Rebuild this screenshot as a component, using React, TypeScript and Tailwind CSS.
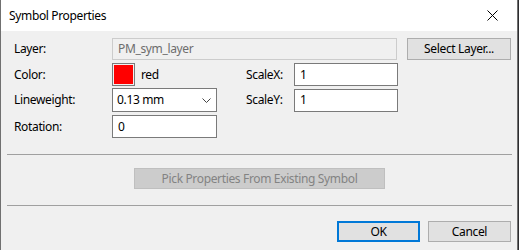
import React from "react";

const font = { fontFamily: '"Noto Sans", "Open Sans", Arial, sans-serif' };

export default function App() {
  return (
    <div className="w-[519px] h-[250px] bg-[#2d2d30] flex" style={font}>
      <div className="w-[518px] h-[250px] flex flex-col border-l border-r border-[#707070] bg-[#f0f0f0] text-[12px] tracking-[-0.35px] text-black leading-none">
        {/* Title bar */}
        <div className="h-[31px] bg-white flex items-center justify-between pl-[8px]">
          <span className="text-[12px] text-black">Symbol Properties</span>
          <div className="w-[46px] h-[31px] flex items-center justify-center mr-[2px]">
            <svg width="11" height="11" viewBox="0 0 11 11">
              <path d="M0.5 0.5 L10.5 10.5 M10.5 0.5 L0.5 10.5" stroke="#000" strokeWidth="1" fill="none" />
            </svg>
          </div>
        </div>

        {/* Body */}
        <div className="flex flex-col pl-[13px] pt-[7px]">
          {/* Row 1 */}
          <div className="flex items-center h-[22px]">
            <div className="w-[98px]">Layer:</div>
            <div className="w-[285px] h-[22px] border border-[#cccccc] bg-[#f0f0f0] text-[#6d6d6d] flex items-center pl-[5px]">
              PM_sym_layer
            </div>
            <div className="ml-[10px] w-[104px] h-[22px] border border-[#adadad] bg-[#e1e1e1] flex items-center justify-center">
              Select Layer...
            </div>
          </div>

          {/* Row 2 */}
          <div className="flex items-center h-[23px] mt-[3px]">
            <div className="w-[98px]">Color:</div>
            <div className="w-[23px] h-[23px] border border-[#7a7a7a] p-[1px] bg-[#f0f0f0]">
              <div className="w-full h-full bg-[#ff0000]" />
            </div>
            <div className="w-[111px] pl-[6px]">red</div>
            <div className="w-[48px]">ScaleX:</div>
            <div className="w-[104px] h-[23px] border border-[#7a7a7a] bg-white flex items-center pl-[5px]">1</div>
          </div>

          {/* Row 3 */}
          <div className="flex items-center h-[24px] mt-[2px]">
            <div className="w-[98px]">Lineweight:</div>
            <div className="w-[105px] h-[24px] border border-[#7a7a7a] bg-white flex items-center justify-between pl-[4px] pr-[5px]">
              <span>0.13 mm</span>
              <svg width="9" height="5" viewBox="0 0 9 5">
                <path d="M0.5 0.5 L4.5 4.5 L8.5 0.5" stroke="#444" strokeWidth="1" fill="none" />
              </svg>
            </div>
            <div className="w-[29px]" />
            <div className="w-[48px]">ScaleY:</div>
            <div className="w-[104px] h-[23px] border border-[#7a7a7a] bg-white flex items-center pl-[5px]">1</div>
          </div>

          {/* Row 4 */}
          <div className="flex items-center h-[23px] mt-[3px]">
            <div className="w-[98px]">Rotation:</div>
            <div className="w-[105px] h-[23px] border border-[#7a7a7a] bg-white flex items-center pl-[5px]">0</div>
          </div>
        </div>

        {/* Separator */}
        <div className="ml-[6px] w-[505px] h-px bg-[#a0a0a0] mt-[16px]" />

        <div className="flex mt-[13px] pl-[133px]">
          <div className="w-[251px] h-[21px] border border-[#bfbfbf] bg-[#cccccc] text-[#838383] flex items-center justify-center">
            Pick Properties From Existing Symbol
          </div>
        </div>

        <div className="ml-[6px] w-[505px] h-px bg-[#a0a0a0] mt-[16px]" />

        <div className="flex mt-[15px] pl-[336px] gap-[8px]">
          <div className="w-[83px] h-[21px] border-2 border-[#0078d7] bg-[#e1e1e1] flex items-center justify-center">OK</div>
          <div className="w-[83px] h-[21px] border border-[#adadad] bg-[#e1e1e1] flex items-center justify-center">Cancel</div>
        </div>
      </div>
    </div>
  );
}
